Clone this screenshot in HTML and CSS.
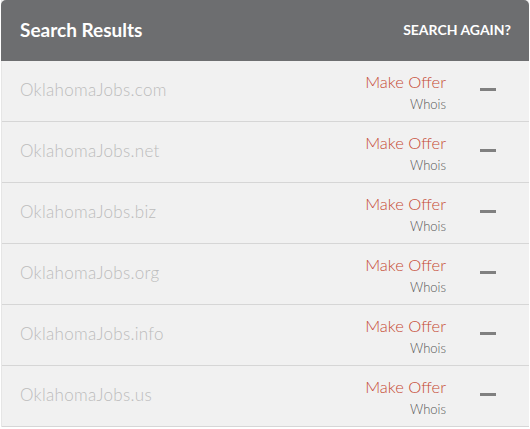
FILE: index.html
```html
<!DOCTYPE html>
<html>
<head>
<meta charset="utf-8">
<link rel="stylesheet" href="styles.css">
</head>
<body>
<div class="panel">
  <div class="header">
    <h1 class="title">Search Results</h1>
    <a class="again">SEARCH AGAIN?</a>
  </div>
  <div class="row">
    <div class="domain">OklahomaJobs.com</div>
    <div class="actions"><a class="offer">Make Offer</a><a class="whois">Whois</a></div>
    <div class="toggle"><span class="dash"></span></div>
  </div>
  <div class="row">
    <div class="domain">OklahomaJobs.net</div>
    <div class="actions"><a class="offer">Make Offer</a><a class="whois">Whois</a></div>
    <div class="toggle"><span class="dash"></span></div>
  </div>
  <div class="row">
    <div class="domain">OklahomaJobs.biz</div>
    <div class="actions"><a class="offer">Make Offer</a><a class="whois">Whois</a></div>
    <div class="toggle"><span class="dash"></span></div>
  </div>
  <div class="row">
    <div class="domain">OklahomaJobs.org</div>
    <div class="actions"><a class="offer">Make Offer</a><a class="whois">Whois</a></div>
    <div class="toggle"><span class="dash"></span></div>
  </div>
  <div class="row">
    <div class="domain">OklahomaJobs.info</div>
    <div class="actions"><a class="offer">Make Offer</a><a class="whois">Whois</a></div>
    <div class="toggle"><span class="dash"></span></div>
  </div>
  <div class="row">
    <div class="domain">OklahomaJobs.us</div>
    <div class="actions"><a class="offer">Make Offer</a><a class="whois">Whois</a></div>
    <div class="toggle"><span class="dash"></span></div>
  </div>
</div>
</body>
</html>
```
FILE: styles.css
```css
html, body {
  margin: 0;
  padding: 0;
  background: #ffffff;
}
body {
  font-family: Lato, "Open Sans", sans-serif;
}
.panel {
  width: 528px;
  margin-left: 1px;
  background: #f1f1f1;
  border-left: 1px solid #e6e6e6;
  box-sizing: border-box;
}
.header {
  height: 61px;
  background: #6d6e70;
  border-radius: 5px 5px 0 0;
  margin-left: -1px;
  display: flex;
  align-items: center;
  justify-content: space-between;
  padding: 0 18px 2px 19px;
  box-sizing: border-box;
}
.title {
  margin: 0;
  font-size: 19px;
  font-weight: 700;
  color: #ffffff;
}
.again {
  font-size: 14px;
  font-weight: 700;
  color: #ffffff;
}
.row {
  height: 61px;
  border-bottom: 1px solid #d6d6d6;
  display: flex;
  align-items: center;
  box-sizing: border-box;
  padding-left: 18px;
}
.domain {
  flex: 1;
  font-size: 17px;
  font-weight: 300;
  letter-spacing: 0.3px;
  color: #bcbcbc;
  padding-bottom: 3px;
}
.actions {
  display: flex;
  flex-direction: column;
  align-items: flex-end;
  padding-top: 2px;
}
.offer {
  font-size: 16.5px;
  font-weight: 300;
  color: #c64a34;
  line-height: 20px;
}
.whois {
  font-size: 13px;
  font-weight: 300;
  color: #555555;
  line-height: 16px;
  margin-top: 4px;
}
.toggle {
  width: 83px;
  display: flex;
  justify-content: center;
  padding-bottom: 4px;
  box-sizing: border-box;
}
.dash {
  display: block;
  width: 16px;
  height: 3px;
  background: #808080;
}
```
